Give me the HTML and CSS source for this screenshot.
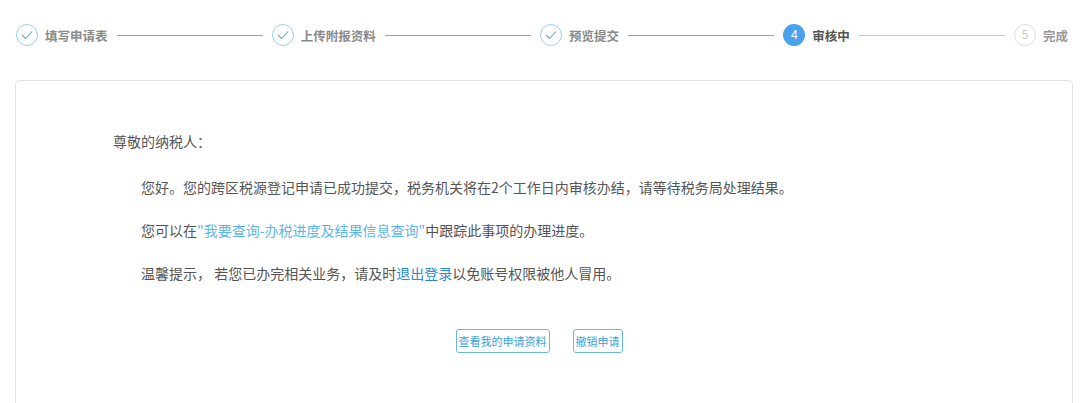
FILE: index.html
```html
<!DOCTYPE html>
<html>
<head>
    <title>审核中</title>
    <link rel="stylesheet" href="styles.css">
</head>
<body>
    <div class="steps">
        <div class="step done">
            <span class="circle"><svg width="12" height="10" viewBox="0 0 12 10"><polyline points="1,5 4.5,8.5 11,1.5" fill="none" stroke="#5aa8e8" stroke-width="1.1"/></svg></span>
            <span class="label">填写申请表</span>
        </div>
        <div class="line done"></div>
        <div class="step done">
            <span class="circle"><svg width="12" height="10" viewBox="0 0 12 10"><polyline points="1,5 4.5,8.5 11,1.5" fill="none" stroke="#5aa8e8" stroke-width="1.1"/></svg></span>
            <span class="label">上传附报资料</span>
        </div>
        <div class="line done"></div>
        <div class="step done">
            <span class="circle"><svg width="12" height="10" viewBox="0 0 12 10"><polyline points="1,5 4.5,8.5 11,1.5" fill="none" stroke="#5aa8e8" stroke-width="1.1"/></svg></span>
            <span class="label">预览提交</span>
        </div>
        <div class="line done"></div>
        <div class="step active">
            <span class="circle">4</span>
            <span class="label">审核中</span>
        </div>
        <div class="line"></div>
        <div class="step todo">
            <span class="circle">5</span>
            <span class="label">完成</span>
        </div>
    </div>

    <div class="card">
        <p class="greet">尊敬的纳税人：</p>
        <p class="para">您好。您的跨区税源登记申请已成功提交，税务机关将在2个工作日内审核办结，请等待税务局处理结果。</p>
        <p class="para">您可以在<a class="link-light" href="#">"我要查询-办税进度及结果信息查询"</a>中跟踪此事项的办理进度。</p>
        <p class="para">温馨提示， 若您已办完相关业务，请及时<a class="link-dark" href="#">退出登录</a>以免账号权限被他人冒用。</p>
        <div class="actions">
            <button class="btn">查看我的申请资料</button>
            <button class="btn">撤销申请</button>
        </div>
    </div>
</body>
</html>
```

FILE: styles.css
```css
body {
    margin: 0;
    background: #fff;
    font-family: "Microsoft YaHei", "Noto Sans CJK SC", sans-serif;
}
.steps {
    display: flex;
    align-items: center;
    padding: 24px 12px 0 16px;
    height: 22px;
}
.step {
    display: flex;
    align-items: center;
    gap: 7px;
}
.circle {
    width: 22px;
    height: 22px;
    box-sizing: border-box;
    border-radius: 50%;
    display: flex;
    align-items: center;
    justify-content: center;
    font-size: 12px;
    font-family: "Liberation Sans", Arial, sans-serif;
}
.label {
    font-size: 12.5px;
    font-weight: bold;
    color: #8a8a8a;
    white-space: nowrap;
}
.step.done .circle {
    border: 1px solid #9ccdf3;
}
.step.active .circle {
    background: #4aa3ea;
    color: #fff;
}
.step.active .label {
    color: #555;
}
.step.todo .circle {
    border: 1px solid #ddd;
    color: #ccc;
}
.step.todo .label {
    color: #999;
}
.line {
    flex: 1;
    height: 1px;
    background: #c8c8c8;
    margin: 0 9px 0 9px;
}
.line.done {
    background: #6aaee6;
}
.card {
    margin: 34px 7px 0 15px;
    border: 1px solid #e4e4e4;
    border-radius: 4px;
    padding: 50px 0 60px 97px;
    color: #555;
    font-size: 14px;
}
.card p {
    margin: 0;
    line-height: 20px;
}
.greet {
    padding-bottom: 26px;
}
.para {
    padding-left: 28px;
    padding-bottom: 23px;
}
.link-light {
    color: #5cb6ec;
    text-decoration: none;
}
.link-dark {
    color: #2a88d6;
    text-decoration: none;
}
.actions {
    display: flex;
    justify-content: center;
    gap: 23px;
    margin: 23px 0 0 -107px;
}
.btn {
    height: 24px;
    padding: 0 2px;
    background: #fff;
    border: 1px solid #6ab8e6;
    border-radius: 3px;
    color: #3b9fdc;
    font-family: "Microsoft YaHei", "Noto Sans CJK SC", sans-serif;
    font-size: 11px;
}
```
